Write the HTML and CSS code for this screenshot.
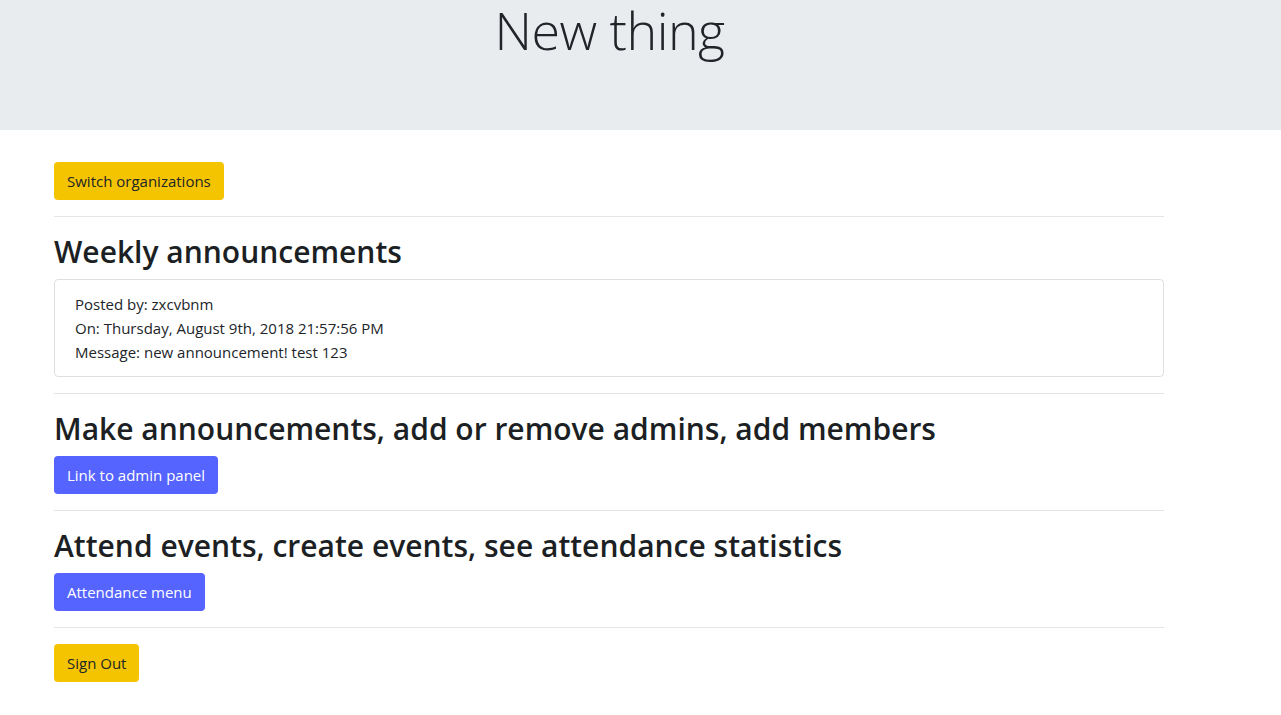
FILE: index.html
```html
<!DOCTYPE html>
<html lang="en">
<head>
<meta charset="utf-8">
<title>New thing</title>
<link rel="stylesheet" href="styles.css">
</head>
<body>
<header class="hero">
  <h1 class="hero-title">New thing</h1>
</header>
<main class="content">
  <button class="btn btn-warning">Switch organizations</button>
  <hr class="divider">
  <h2 class="section-title">Weekly announcements</h2>
  <div class="card">
    <div class="card-line">Posted by: zxcvbnm</div>
    <div class="card-line">On: Thursday, August 9th, 2018 21:57:56 PM</div>
    <div class="card-line">Message: new announcement! test 123</div>
  </div>
  <hr class="divider">
  <h2 class="section-title">Make announcements, add or remove admins, add members</h2>
  <button class="btn btn-primary">Link to admin panel</button>
  <hr class="divider">
  <h2 class="section-title">Attend events, create events, see attendance statistics</h2>
  <button class="btn btn-primary">Attendance menu</button>
  <hr class="divider">
  <button class="btn btn-warning">Sign Out</button>
</main>
</body>
</html>
```
FILE: styles.css
```css
* { box-sizing: border-box; }
html, body {
  margin: 0;
  padding: 0;
  background: #fff;
  color: #212529;
  font-family: "Open Sans", "Noto Sans", sans-serif;
  font-size: 16px;
  line-height: 1.5;
}
.hero {
  background: #e9ecef;
  height: 130px;
  padding: 0 62px 0 0;
  text-align: center;
}
.hero-title {
  margin: 0;
  font-size: 52px;
  font-weight: 300;
  line-height: 60px;
  letter-spacing: -0.5px;
  color: #212529;
}
.content {
  width: 1164px;
  padding: 32px 0 0 54px;
  display: flex;
  flex-direction: column;
  align-items: flex-start;
}
.divider {
  width: 100%;
  margin: 16px 0;
  border: 0;
  border-top: 1px solid rgba(0,0,0,0.1);
  height: 0;
}
.btn {
  font-family: inherit;
  font-size: 15px;
  line-height: 24px;
  padding: 6px 12px;
  border: 1px solid transparent;
  border-radius: 4px;
  cursor: pointer;
}
.btn-warning {
  background: #f5c400;
  color: #212529;
}
.btn-primary {
  background: #5563ff;
  color: #fff;
}
.section-title {
  margin: 0 0 8px 0;
  font-size: 30px;
  font-weight: 600;
  line-height: 38px;
  letter-spacing: 0;
  color: #1c1f23;
}
.card {
  width: 100%;
  border: 1px solid rgba(0,0,0,0.125);
  border-radius: 4px;
  padding: 12px 20px;
  font-size: 15px;
}
.card-line {
  line-height: 24px;
}
```
